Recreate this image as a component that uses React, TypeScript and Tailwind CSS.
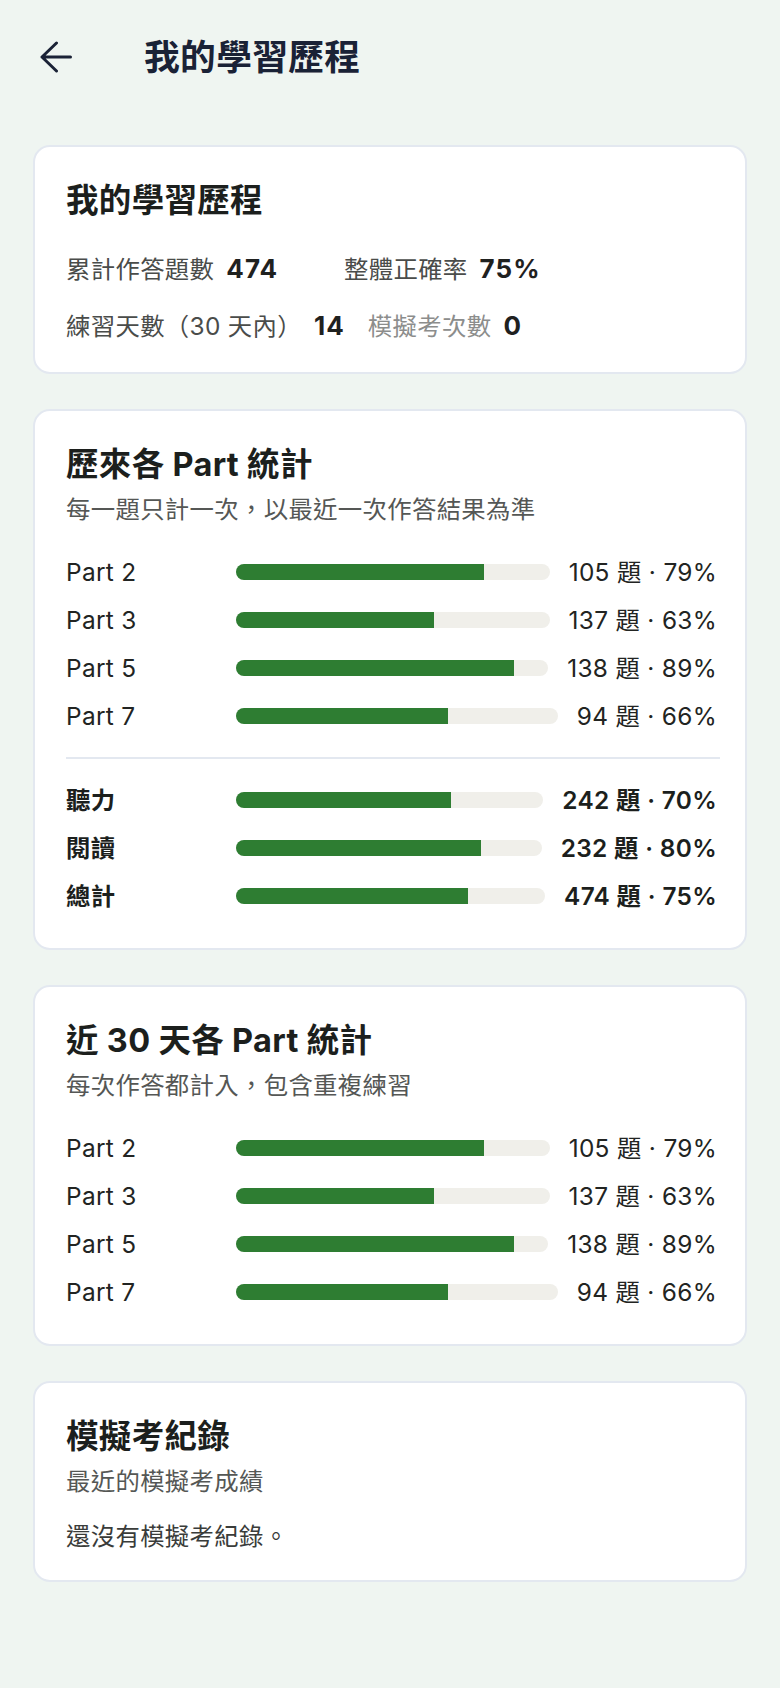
import type { ReactNode } from "react"

type PartStat = {
  label: string
  count: number
  pct: number
}

const allTimeParts: PartStat[] = [
  { label: "Part 2", count: 105, pct: 79 },
  { label: "Part 3", count: 137, pct: 63 },
  { label: "Part 5", count: 138, pct: 89 },
  { label: "Part 7", count: 94, pct: 66 },
]

const summary: PartStat[] = [
  { label: "聽力", count: 242, pct: 70 },
  { label: "閱讀", count: 232, pct: 80 },
  { label: "總計", count: 474, pct: 75 },
]

const recentParts: PartStat[] = [
  { label: "Part 2", count: 105, pct: 79 },
  { label: "Part 3", count: 137, pct: 63 },
  { label: "Part 5", count: 138, pct: 89 },
  { label: "Part 7", count: 94, pct: 66 },
]

function BackArrow() {
  return (
    <svg width="32" height="32" viewBox="0 0 32 32" fill="none" aria-hidden="true">
      <path
        d="M30.5 16H2M16.5 2L2 16l14.5 14"
        stroke="#1a2236"
        strokeWidth="3"
        strokeLinecap="round"
        strokeLinejoin="round"
      />
    </svg>
  )
}

function Card({ children }: { children: ReactNode }) {
  return (
    <section className="rounded-[17px] border-2 border-[#e3e8f0] bg-white pt-[34px] pr-[28px] pb-[28px] pl-[31px]">
      {children}
    </section>
  )
}

function CardTitle({ children }: { children: ReactNode }) {
  return <h2 className="text-[32.5px] leading-[40px] font-bold text-[#1c1f1d]">{children}</h2>
}

function CardSubtitle({ children }: { children: ReactNode }) {
  return <p className="mt-[8px] text-[24.4px] leading-[32px] text-[#555755]">{children}</p>
}

function StatBar({ stat, bold }: { stat: PartStat; bold?: boolean }) {
  return (
    <div className="flex h-[48px] items-center gap-[19px]">
      <span className={`w-[151px] shrink-0 ${bold ? "font-bold text-[#1c1f1d]" : "text-[#222422]"}`}>
        {stat.label}
      </span>
      <div className="h-[16px] flex-1 overflow-hidden rounded-full bg-[#f0efea]">
        <div className="h-full bg-[#2e7d32]" style={{ width: `${stat.pct}%` }} />
      </div>
      <span className={`whitespace-nowrap ${bold ? "font-semibold text-[#1c1f1d]" : "text-[#222422]"}`}>
        {stat.count} 題 · {stat.pct}%
      </span>
    </div>
  )
}

function Metric({ label, value, muted, wide }: { label: string; value: string; muted?: boolean; wide?: boolean }) {
  return (
    <div className={`flex h-[36px] items-baseline gap-[12px] ${wide ? "min-w-[255px]" : ""}`}>
      <span className={`text-[24.4px] leading-[36px] ${muted ? "text-[#8c8d8c]" : "text-[#4a4c4a]"}`}>{label}</span>
      <span className="text-[26px] leading-[36px] font-bold tracking-[0.04em] text-[#1f211f]">{value}</span>
    </div>
  )
}

export default function App() {
  return (
    <div className="min-h-screen bg-[#eff5f1] font-[Inter,'Noto_Sans_CJK_TC',sans-serif] tracking-[0.02em]">
      <header className="flex h-[114px] items-center gap-[72px] pl-[40px]">
        <button type="button" className="flex h-[32px] w-[32px] items-center justify-center">
          <BackArrow />
        </button>
        <h1 className="text-[35.75px] leading-[44px] font-bold text-[#1a2236]">我的學習歷程</h1>
      </header>

      <main className="flex flex-col gap-[35px] px-[33px] pt-[31px] pb-[40px]">
        <Card>
          <CardTitle>我的學習歷程</CardTitle>
          <div className="mt-[30px] flex flex-wrap gap-x-[23px] gap-y-[21px]">
            <Metric label="累計作答題數" value="474" wide />
            <Metric label="整體正確率" value="75%" />
            <Metric label="練習天數（30 天內）" value="14" wide />
            <Metric label="模擬考次數" value="0" muted />
          </div>
        </Card>

        <Card>
          <CardTitle>歷來各 Part 統計</CardTitle>
          <CardSubtitle>每一題只計一次，以最近一次作答結果為準</CardSubtitle>
          <div className="mt-[23px] text-[24.4px]">
            {allTimeParts.map((s) => (
              <StatBar key={s.label} stat={s} />
            ))}
          </div>
          <div className="mt-[17px] mr-[-3px] h-[2px] bg-[#e3e8f0]" />
          <div className="mt-[17px] text-[24.4px]">
            {summary.map((s) => (
              <StatBar key={s.label} stat={s} bold />
            ))}
          </div>
        </Card>

        <Card>
          <CardTitle>近 30 天各 Part 統計</CardTitle>
          <CardSubtitle>每次作答都計入，包含重複練習</CardSubtitle>
          <div className="mt-[23px] text-[24.4px]">
            {recentParts.map((s) => (
              <StatBar key={s.label} stat={s} />
            ))}
          </div>
        </Card>

        <Card>
          <CardTitle>模擬考紀錄</CardTitle>
          <CardSubtitle>最近的模擬考成績</CardSubtitle>
          <p className="mt-[23px] text-[24.4px] leading-[32px] text-[#3a3c3a]">還沒有模擬考紀錄。</p>
        </Card>
      </main>
    </div>
  )
}
